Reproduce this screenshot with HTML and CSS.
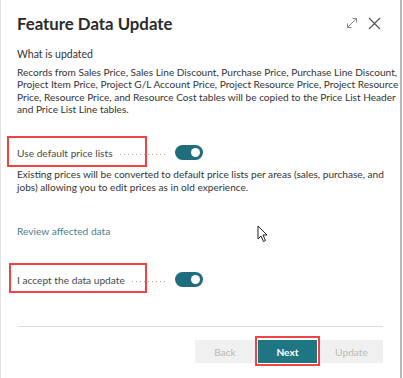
FILE: index.html
```html
<!DOCTYPE html>
<html>
<head>
<meta charset="utf-8">
<link rel="stylesheet" href="styles.css">
</head>
<body>
<div class="dialog">
  <div class="header">
    <h1 class="title">Feature Data Update</h1>
    <div class="header-icons">
      <svg class="icon-expand" width="12" height="12" viewBox="0 0 12 12"><path d="M1.5 10.5 L10.5 1.5 M6.5 1.5 H10.5 V5.5 M1.5 6.5 V10.5 H5.5" fill="none" stroke="#8a8a8a" stroke-width="1"/></svg>
      <svg class="icon-close" width="13" height="13" viewBox="0 0 13 13"><path d="M1 1 L12 12 M12 1 L1 12" fill="none" stroke="#555" stroke-width="1.2"/></svg>
    </div>
  </div>
  <div class="section-label">What is updated</div>
  <p class="desc">Records from Sales Price, Sales Line Discount, Purchase Price, Purchase Line Discount,<br>Project Item Price, Project G/L Account Price, Project Resource Price, Project Resource<br>Price, Resource Price, and Resource Cost tables will be copied to the Price List Header<br>and Price List Line tables.</p>

  <div class="field field-first">
    <span class="hl hl-1"></span>
    <span class="field-caption">
      <span class="field-label">Use default price lists</span>
      <span class="leader"></span>
    </span>
    <span class="toggle"><span class="knob"></span></span>
  </div>
  <p class="desc desc-2">Existing prices will be converted to default price lists per areas (sales, purchase, and<br>jobs) allowing you to edit prices as in old experience.</p>

  <a class="link">Review affected data</a>

  <div class="field field-second">
    <span class="hl hl-2"></span>
    <span class="field-caption">
      <span class="field-label">I accept the data update</span>
      <span class="leader"></span>
    </span>
    <span class="toggle"><span class="knob"></span></span>
  </div>

  <div class="footer">
    <button class="btn btn-disabled">Back</button>
    <button class="btn btn-primary">Next<span class="hl hl-3"></span></button>
    <button class="btn btn-disabled btn-wide">Update</button>
  </div>

  <svg class="cursor" width="12" height="18" viewBox="0 0 12 18"><path d="M1 1 V14 L4 11 L6.5 16.5 L8.5 15.5 L6 10 H10 Z" fill="#fff" stroke="#222" stroke-width="1" stroke-linejoin="round"/></svg>
</div>
</body>
</html>
```

FILE: styles.css
```css
* { box-sizing: border-box; }
html, body {
  margin: 0;
  padding: 0;
  background: #fff;
}
body {
  font-family: "Lato", "Open Sans", sans-serif;
  color: #333;
  width: 403px;
  height: 378px;
  overflow: hidden;
}
.dialog {
  position: relative;
  width: 402px;
  height: 378px;
  border-left: 1px solid #e2e2e2;
  border-right: 2px solid #b8b8b8;
  padding: 0 16px 0 16px;
}
.header {
  display: flex;
  align-items: center;
  justify-content: space-between;
  padding-top: 12px;
  height: 34px;
}
.title {
  margin: 0;
  font-size: 16.8px;
  font-weight: 700;
  color: #2b2b2b;
}
.header-icons {
  display: flex;
  align-items: center;
  gap: 10px;
  padding-right: 3px;
}
.section-label {
  margin-top: 13px;
  font-size: 10.5px;
  color: #333;
  line-height: 14px;
}
.desc {
  margin: 5px 0 0 0;
  font-size: 10.1px;
  line-height: 12.4px;
  color: #333;
  white-space: nowrap;
}
.field {
  position: relative;
  display: flex;
  align-items: center;
  height: 16px;
}
.field-first { margin-top: 29px; }
.field-second { margin-top: 35px; }
.field-caption {
  display: flex;
  align-items: center;
  width: 149px;
}
.field-label {
  font-size: 10.2px;
  color: #4a4a4a;
  white-space: nowrap;
}
.leader {
  flex: 1;
  height: 1px;
  margin-left: 7px;
  margin-top: 3px;
  background-image: linear-gradient(to right, #b0b0b0 1px, transparent 1px);
  background-size: 4px 1px;
}
.toggle {
  position: relative;
  width: 28px;
  height: 15px;
  margin-left: 9px;
  border-radius: 8px;
  background: #1f6e7d;
}
.knob {
  position: absolute;
  right: 3px;
  top: 3px;
  width: 9px;
  height: 9px;
  border-radius: 50%;
  background: #fff;
}
.desc-2 { margin-top: 7px; line-height: 13px; }
.link {
  display: block;
  margin-top: 31px;
  font-size: 10.2px;
  color: #4b7f8a;
}
.hl {
  position: absolute;
  border: 2px solid #ee4444;
  pointer-events: none;
}
.hl-1 { left: -10px; top: -9px; width: 140px; height: 31px; }
.hl-2 { left: -8px; top: -9px; width: 138px; height: 30px; }
.footer {
  position: absolute;
  left: 17px;
  right: 17px;
  top: 326px;
  border-top: 1px solid #dcdcdc;
  display: flex;
  justify-content: flex-end;
  gap: 3px;
  padding-top: 13px;
}
.btn {
  position: relative;
  height: 23px;
  border: none;
  font-family: inherit;
  font-size: 10.2px;
  padding: 0;
}
.btn-disabled {
  width: 60px;
  background: #f0f0f0;
  color: #b9b9b9;
}
.btn-wide { width: 63px; }
.btn-primary {
  width: 59px;
  background: #1e7683;
  color: #fff;
  font-weight: 700;
}
.hl-3 { left: -3px; top: -4px; width: 65px; height: 30px; }
.cursor {
  position: absolute;
  left: 256px;
  top: 225px;
}
```
